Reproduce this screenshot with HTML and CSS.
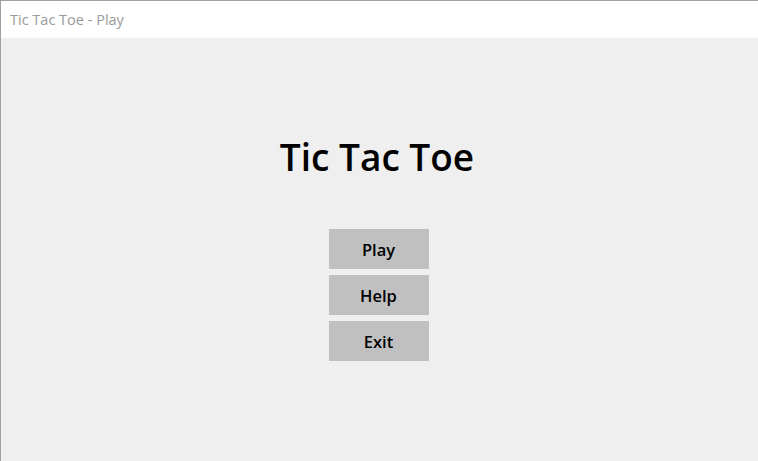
FILE: index.html
```html
<!DOCTYPE html>
<html>
<head>
<meta charset="utf-8">
<link rel="stylesheet" href="styles.css">
</head>
<body>
<div class="window">
  <div class="titlebar">Tic Tac Toe - Play</div>
  <main class="content">
    <h1 class="heading">Tic Tac Toe</h1>
    <div class="menu">
      <button class="btn">Play</button>
      <button class="btn">Help</button>
      <button class="btn">Exit</button>
    </div>
  </main>
</div>
</body>
</html>
```

FILE: styles.css
```css
html, body {
  margin: 0;
  padding: 0;
  width: 758px;
  height: 461px;
  overflow: hidden;
}
body {
  font-family: "Open Sans", "Noto Sans", sans-serif;
}
.window {
  box-sizing: border-box;
  width: 758px;
  height: 461px;
  border-top: 1px solid #a0a0a0;
  border-left: 1px solid #a0a0a0;
  display: flex;
  flex-direction: column;
}
.titlebar {
  height: 37px;
  background: #ffffff;
  color: #9a9a9a;
  font-size: 14.5px;
  line-height: 37px;
  padding-left: 9px;
}
.content {
  flex: 1;
  background: #efefef;
  display: flex;
  flex-direction: column;
  align-items: center;
  padding-right: 3px;
}
.heading {
  margin: 93px 0 0 0;
  font-size: 37px;
  font-weight: 600;
  line-height: 52px;
  color: #000;
  position: relative;
  left: -1px;
}
.menu {
  margin-top: 46px;
  margin-left: 1px;
  display: flex;
  flex-direction: column;
  gap: 6px;
}
.btn {
  width: 100px;
  height: 40px;
  border: none;
  background: #c0c0c0;
  font-family: "Open Sans", "Noto Sans", sans-serif;
  font-size: 16.5px;
  font-weight: 600;
  color: #000;
  padding: 0;
}
```
